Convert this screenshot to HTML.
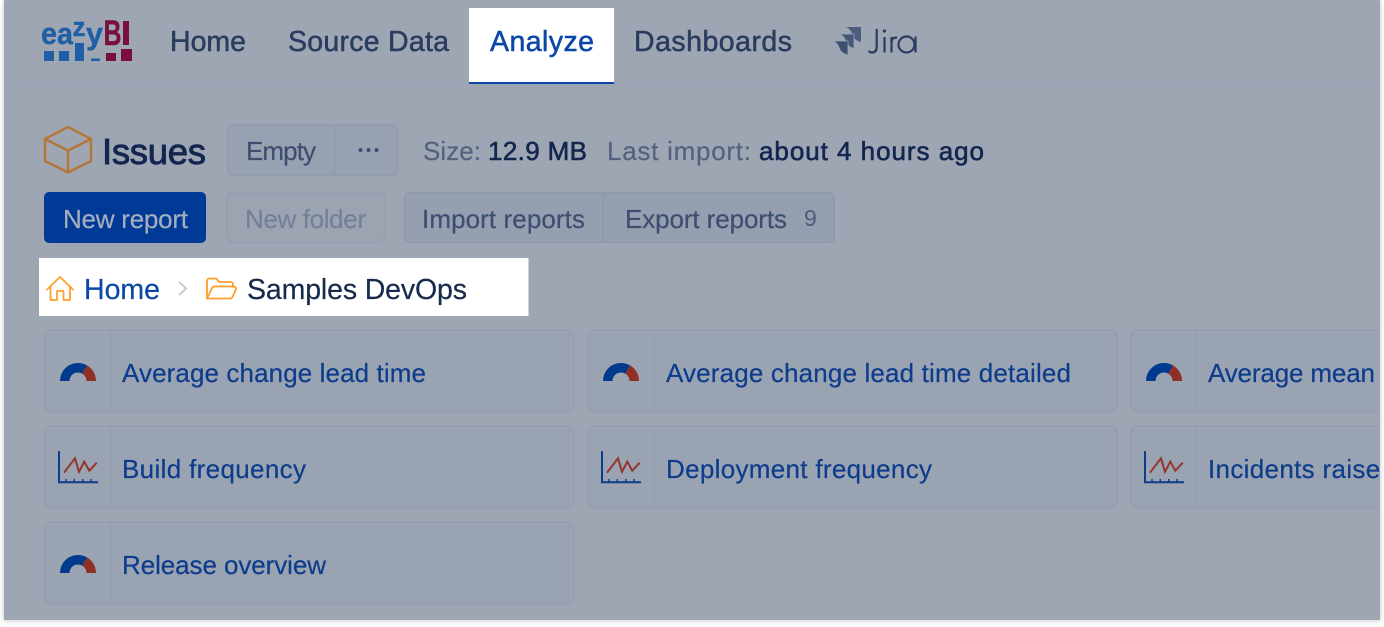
<!DOCTYPE html>
<html lang="en">
<head>
<meta charset="utf-8">
<title>Issues</title>
<style>
html,body{margin:0;padding:0;background:#fff;width:1384px;height:627px;overflow:hidden}
svg{position:absolute;left:0;top:0;display:block}
text{font-family:"Liberation Sans",Arial,sans-serif}
.nav{font-size:28.5px;fill:#2a3c5f;stroke:#2a3c5f;stroke-width:.5}
.t25{font-size:26px;stroke-width:.2}
.card{fill:#9aa3b2;stroke:#949eb0;stroke-width:1.5}
.lnk{font-size:26px;fill:#0c3c8c;stroke:#0c3c8c;stroke-width:.2}
</style>
</head>
<body>
<svg width="1384" height="627" viewBox="0 0 1384 627" xmlns="http://www.w3.org/2000/svg">
<defs>
<filter id="sh" x="-2%" y="-2%" width="104%" height="104%"><feGaussianBlur stdDeviation="2"/></filter>
<clipPath id="pg"><rect x="4" y="0" width="1376" height="620"/></clipPath>
<g id="gauge">
<path d="M60 381A18 18 0 0 1 87 365.4L82.2 373.6A8.5 8.5 0 0 0 69.5 381Z" fill="#003a8f"/>
<path d="M87 365.4A18 18 0 0 1 96 381H86.5A8.5 8.5 0 0 0 82.2 373.6Z" fill="#8f2f25"/>
</g>
<g id="line">
<path d="M59 451V482.2H98" fill="none" stroke="#0c3c8c" stroke-width="2"/>
<path d="M66 479V482M74.3 479V482M82.7 479V482M91 479V482" stroke="#0c3c8c" stroke-width="1.400"/>
<path d="M64 472.7L75 458.3L79 471.7L84.3 461.7L89.3 470.7L96.700 462.7" fill="none" stroke="#93352d" stroke-width="2"/>
</g>
</defs>

<rect x="3.500" y="0" width="1377" height="621" fill="#a9acb2" filter="url(#sh)" opacity=".6"/>
<rect x="4" y="0" width="1376" height="620" fill="#9fa6b3"/>

<g clip-path="url(#pg)">
<!-- nav -->
<rect x="4" y="82.5" width="1376" height="1.5" fill="#98a3b6"/>
<rect x="469" y="8" width="145" height="74" fill="#fff"/>
<rect x="469" y="82" width="145" height="2" fill="#0a47a6"/>

<!-- logo -->
<g font-weight="700" stroke-width=".4">
<text x="41" y="44" font-size="31" fill="#1f5fa6" stroke="#1f5fa6" textLength="32" lengthAdjust="spacingAndGlyphs">ea</text>
<text x="72.500" y="36" font-size="27" fill="#1f5fa6" stroke="#1f5fa6" textLength="13" lengthAdjust="spacingAndGlyphs">z</text>
<text x="86" y="44" font-size="31" fill="#1f5fa6" stroke="#1f5fa6" textLength="17" lengthAdjust="spacingAndGlyphs">y</text>
<text x="103.500" y="45" font-size="35" fill="#7a0f3e" stroke="#7a0f3e" textLength="18" lengthAdjust="spacingAndGlyphs">B</text>
</g>
<rect x="123" y="21" width="6" height="24" fill="#7a0f3e"/>
<g fill="#1f5fa6"><rect x="44" y="51" width="10" height="10"/><rect x="59" y="51" width="10" height="10"/><rect x="75" y="43" width="9" height="18"/><rect x="91" y="58.5" width="9" height="2.5"/></g>
<g fill="#7a0f3e"><rect x="106" y="53" width="10" height="8"/><rect x="121" y="49" width="11" height="12"/></g>

<text class="nav" x="170" y="51" textLength="76">Home</text>
<text class="nav" x="288" y="51" textLength="161">Source Data</text>
<text class="nav" x="490" y="51" textLength="104" style="fill:#0a47a6;stroke:#0a47a6">Analyze</text>
<text class="nav" x="634" y="51" textLength="158">Dashboards</text>
<path d="M846 27H861V42C856 41 853 38 852 33.500C851 30.500 849 28.500 846 27Z" fill="#4b5e7e"/>
<path d="M839.500 34H854V48.500C849.500 47.500 846.500 44.500 845.500 40.500C844.500 37.500 842.500 35.500 839.500 34Z" fill="#45587a" stroke="#9fa6b3" stroke-width=".7"/>
<path d="M833 41H848V55C843 54 840 51 839 47.500C838 44.500 836 42.500 833 41Z" fill="#3e5173" stroke="#9fa6b3" stroke-width=".7"/>
<g fill="none" stroke="#2a3c5f" stroke-width="2.200">
<path d="M876.700 29V46.500C876.700 50.500 875 52.500 872 52.500C870.500 52.500 869.500 52 868.500 51"/>
<path d="M884.500 37V52.500"/>
<path d="M891.500 52.500V37M891.500 43.500C891.500 39 893 37.500 897 37.500"/>
<circle cx="906.500" cy="44.500" r="8"/>
<path d="M915.500 36.500V52.500"/>
</g>
<circle cx="884.500" cy="31" r="1.600" fill="#2a3c5f"/>

<!-- title row -->
<g fill="none" stroke="#b4773a" stroke-width="2.500" stroke-linejoin="round">
<path d="M68 127L91 139V161L68 172.500L45 161V139Z"/>
<path d="M45 139L68 150.500L91 139M68 150.500V172.500"/>
</g>
<text x="102" y="164" font-size="36.500" fill="#12264f" stroke="#12264f" stroke-width=".9" textLength="104">Issues</text>

<rect x="227.750" y="124.750" width="170.500" height="50.500" rx="6" fill="#98a1b1" stroke="#929cae" stroke-width="1.500"/>
<rect x="334" y="125" width="1.500" height="50" fill="#929cae"/>
<text class="t25" x="246" y="160" fill="#3d4e70" stroke="#3d4e70" textLength="70">Empty</text>
<g fill="#3d4e70"><circle cx="360.500" cy="150" r="2"/><circle cx="368.500" cy="150" r="2"/><circle cx="376.500" cy="150" r="2"/></g>

<text class="t25" x="423" y="160" fill="#53627f" stroke="#53627f" textLength="58">Size:</text>
<text class="t25" x="488" y="160" fill="#12264f" textLength="99" style="stroke:#12264f;stroke-width:.6">12.9 MB</text>
<text class="t25" x="607" y="160" fill="#53627f" stroke="#53627f" textLength="144">Last import:</text>
<text class="t25" x="759" y="160" fill="#12264f" textLength="225" style="stroke:#12264f;stroke-width:.6">about 4 hours ago</text>

<!-- buttons -->
<rect x="44" y="192" width="162" height="51" rx="5" fill="#003a96"/>
<text class="t25" x="63" y="228" fill="#a5aebe" stroke="#a5aebe" textLength="125">New report</text>
<rect x="227" y="192.750" width="157.500" height="49.500" rx="5" fill="#9ca4b2" stroke="#959fb0" stroke-width="1.500"/>
<text class="t25" x="245" y="228" fill="#748099" stroke="#748099" textLength="121">New folder</text>
<rect x="404.750" y="192.750" width="429.500" height="49.500" rx="5" fill="#959fb0" stroke="#8f99ac" stroke-width="1.500"/>
<rect x="602" y="193" width="1.500" height="49" fill="#8f99ac"/>
<text class="t25" x="422" y="228" fill="#3d4e70" stroke="#3d4e70" textLength="163">Import reports</text>
<text class="t25" x="625" y="228" fill="#3d4e70" stroke="#3d4e70" textLength="162">Export reports</text>
<text x="804" y="226" font-size="23" fill="#4c5c7c" textLength="13">9</text>

<!-- breadcrumb -->
<rect x="39" y="258" width="489.500" height="58" fill="#fff"/>
<g fill="none" stroke="#ff9f2e" stroke-width="1.800" stroke-linejoin="round" stroke-linecap="round">
<path d="M47 289.500L60 277L73 289.500"/>
<path d="M50.500 286.500V300H57V291H63.500V300H70V286.500"/>
<path d="M207 298.500V281C207 279.500 208 278.500 209.500 278.500H216L219.500 282H231C232 282 233 283 233 284V287"/>
<path d="M207 298.500L212 288C212.500 287 213.500 286.500 214.500 286.500H234C235.500 286.500 236.500 288 236 289.500L232.500 297C232 298 231 298.500 230 298.500Z"/>
</g>
<text x="84" y="299" font-size="28.500" fill="#0b47a6" stroke="#0b47a6" stroke-width=".2" textLength="76">Home</text>
<path d="M179 282L186 288.500L179 295" fill="none" stroke="#c0c5ce" stroke-width="1.800"/>
<text x="247" y="299" font-size="28.500" fill="#172b4d" stroke="#172b4d" stroke-width=".2" textLength="220">Samples DevOps</text>

<!-- cards -->
<g>
<rect class="card" x="44.750" y="329.750" width="529.500" height="82" rx="7"/>
<rect class="card" x="587.750" y="329.750" width="529.500" height="82" rx="7"/>
<rect class="card" x="1130.750" y="329.750" width="529.500" height="82" rx="7"/>
<rect class="card" x="44.750" y="425.750" width="529.500" height="82" rx="7"/>
<rect class="card" x="587.750" y="425.750" width="529.500" height="82" rx="7"/>
<rect class="card" x="1130.750" y="425.750" width="529.500" height="82" rx="7"/>
<rect class="card" x="44.750" y="521.750" width="529.500" height="82" rx="7"/>
</g>
<g fill="#949eb0">
<rect x="110" y="330" width="1.500" height="82"/><rect x="653" y="330" width="1.500" height="82"/><rect x="1196" y="330" width="1.500" height="82"/>
<rect x="110" y="426" width="1.500" height="82"/><rect x="653" y="426" width="1.500" height="82"/><rect x="1196" y="426" width="1.500" height="82"/>
<rect x="110" y="522" width="1.500" height="82"/>
</g>

<use href="#gauge"/>
<use href="#gauge" x="543"/>
<use href="#gauge" x="1086"/>
<use href="#line"/>
<use href="#line" x="543"/>
<use href="#line" x="1086"/>
<use href="#gauge" y="192"/>

<text class="lnk" x="122" y="382" textLength="304">Average change lead time</text>
<text class="lnk" x="666" y="382" textLength="405">Average change lead time detailed</text>
<text class="lnk" x="1208" y="382" textLength="167">Average mean</text>
<text class="lnk" x="122" y="478" textLength="184">Build frequency</text>
<text class="lnk" x="666" y="478" textLength="266">Deployment frequency</text>
<text class="lnk" x="1208" y="478" textLength="187">Incidents raised</text>
<text class="lnk" x="122" y="574" textLength="204">Release overview</text>
</g>
</svg>
</body>
</html>
